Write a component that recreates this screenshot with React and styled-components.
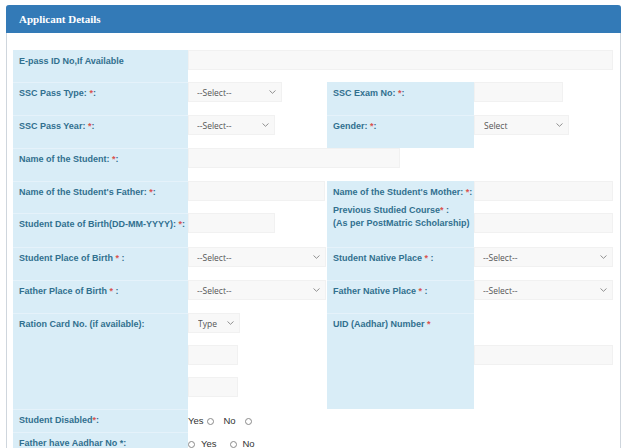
import React from 'react';
import styled, { createGlobalStyle } from 'styled-components';

const GlobalStyle = createGlobalStyle`
  body {
    margin: 0;
    background: #fff;
    font-family: "Liberation Sans", Arial, sans-serif;
  }
`;

const Panel = styled.section`
  margin: 5px 0 0 6px;
  width: 613px;
  border: 1px solid #cfd6dd;
  border-top: none;
  border-radius: 3px 3px 0 0;
`;

const PanelHeader = styled.h3`
  margin: 0 -1px;
  height: 28px;
  padding-left: 13px;
  display: flex;
  align-items: center;
  background: #337ab7;
  border-radius: 3px 3px 0 0;
  color: #fff;
  font-family: "Liberation Serif", "Times New Roman", serif;
  font-size: 11px;
  font-weight: 700;
`;

const PanelBody = styled.div`
  padding: 17px 7px 0 6px;
`;

const Row = styled.div`
  display: grid;
  grid-template-columns: 175px 139px 147px 139px;
  height: ${(p) => p.$h}px;
`;

const Label = styled.div`
  background: #d9edf7;
  border-top: 1px solid ${(p) => (p.$first ? '#d9edf7' : '#e5f2fa')};
  padding: 4px 0 0 6px;
  color: #31708f;
  font-size: 9px;
  font-weight: 700;
  line-height: 12.5px;
  white-space: nowrap;
`;

const LabelText = styled.span`
  display: block;
  margin-top: ${(p) => p.$lift || 0}px;
`;

const Req = styled.span`
  color: #d9534f;
`;

const Field = styled.div`
  grid-column: span ${(p) => p.$span || 1};
  display: flex;
  flex-direction: column;
  align-items: flex-start;
  gap: 12px;
`;

const TextInput = styled.input`
  box-sizing: border-box;
  width: ${(p) => p.$w}px;
  height: 20px;
  margin: 0;
  margin-top: ${(p) => p.$top || 0}px;
  padding: 0 8px;
  background: #f8f8f8;
  border: 1px solid #f1f1f1;
  outline: none;
`;

const SelectWrap = styled.div`
  box-sizing: border-box;
  width: ${(p) => p.$w}px;
  height: 20px;
  display: flex;
  align-items: center;
  background: #f8f8f8;
  border: 1px solid #f1f1f1;
`;

const SelectEl = styled.select`
  flex: 1;
  min-width: 0;
  height: 100%;
  padding: 0 0 0 ${(p) => p.$pad || 8}px;
  margin: 0;
  appearance: none;
  border: none;
  background: transparent;
  outline: none;
  color: #555;
  font-family: "Open Sans", sans-serif;
  font-size: 8.5px;
`;

const Chevron = styled.svg`
  flex: none;
  margin-right: 5px;
  pointer-events: none;
`;

const RadioLine = styled.div`
  display: flex;
  align-items: center;
  padding-top: 5px;
  line-height: 14px;
  color: #333;
  font-size: 9.5px;
`;

const RadioDot = styled.span`
  box-sizing: border-box;
  width: 7px;
  height: 7px;
  border: 1px solid #8a8a8a;
  border-radius: 50%;
  margin: 0 ${(p) => p.$r || 0}px 0 ${(p) => p.$l || 0}px;
`;

const Select = ({ w, text = '--Select--', pad }) => (
  <SelectWrap $w={w}>
    <SelectEl $pad={pad} defaultValue={text}>
      <option>{text}</option>
    </SelectEl>
    <Chevron width="7" height="4" viewBox="0 0 7 4">
      <path d="M0.5 0.5 L3.5 3.3 L6.5 0.5" fill="none" stroke="#777" strokeWidth="0.8" />
    </Chevron>
  </SelectWrap>
);

const L = ({ text, req = true, tail = ':', ...rest }) => (
  <Label {...rest}>
    <LabelText>
      {text}
      {req && <Req>*</Req>}
      {tail}
    </LabelText>
  </Label>
);

const App = () => {
  return (
    <>
      <GlobalStyle />
      <Panel>
        <PanelHeader>Applicant Details</PanelHeader>
        <PanelBody>
          <Row $h={32}>
            <Label $first>E-pass ID No,If Available</Label>
            <Field $span={3}>
              <TextInput $w={425} />
            </Field>
          </Row>
          <Row $h={33}>
            <L text="SSC Pass Type: " />
            <Field>
              <Select w={94} />
            </Field>
            <L text="SSC Exam No: " $first />
            <Field>
              <TextInput $w={89} />
            </Field>
          </Row>
          <Row $h={33}>
            <L text="SSC Pass Year: " />
            <Field>
              <Select w={87} />
            </Field>
            <L text="Gender: " />
            <Field>
              <Select w={95} text="Select" pad={9} />
            </Field>
          </Row>
          <Row $h={33}>
            <L text="Name of the Student: " />
            <Field $span={3}>
              <TextInput $w={212} />
            </Field>
          </Row>
          <Row $h={32}>
            <L text="Name of the Student's Father: " />
            <Field>
              <TextInput $w={137} />
            </Field>
            <L text="Name of the Student's Mother: " $first />
            <Field>
              <TextInput $w={139} />
            </Field>
          </Row>
          <Row $h={34}>
            <L text="Student Date of Birth(DD-MM-YYYY): " />
            <Field>
              <TextInput $w={87} />
            </Field>
            <Label $first>
              <LabelText $lift={-14}>
                Previous Studied Course<Req>*</Req> :
                <br />
                (As per PostMatric Scholarship)
              </LabelText>
            </Label>
            <Field>
              <TextInput $w={139} />
            </Field>
          </Row>
          <Row $h={33}>
            <L text="Student Place of Birth " tail=" :" />
            <Field>
              <Select w={138} />
            </Field>
            <L text="Student Native Place " tail=" :" />
            <Field>
              <Select w={139} />
            </Field>
          </Row>
          <Row $h={33}>
            <L text="Father Place of Birth " tail=" :" />
            <Field>
              <Select w={138} />
            </Field>
            <L text="Father Native Place " tail=" :" />
            <Field>
              <Select w={139} />
            </Field>
          </Row>
          <Row $h={96}>
            <L text="Ration Card No. (if available):" req={false} tail="" />
            <Field>
              <Select w={52} text="Type" pad={9} />
              <TextInput $w={50} />
              <TextInput $w={50} />
            </Field>
            <L text="UID (Aadhar) Number " tail="" />
            <Field>
              <TextInput $w={139} $top={32} />
            </Field>
          </Row>
          <Row $h={23}>
            <L text="Student Disabled" />
            <Field $span={3}>
              <RadioLine>
                Yes
                <RadioDot $l={3} $r={10} />
                No
                <RadioDot $l={9} />
              </RadioLine>
            </Field>
          </Row>
          <Row $h={23}>
            <L text="Father have Aadhar No *:" req={false} tail="" />
            <Field $span={3}>
              <RadioLine>
                <RadioDot $r={6} />
                Yes
                <RadioDot $l={13} $r={6} />
                No
              </RadioLine>
            </Field>
          </Row>
        </PanelBody>
      </Panel>
    </>
  );
};

export default App;
